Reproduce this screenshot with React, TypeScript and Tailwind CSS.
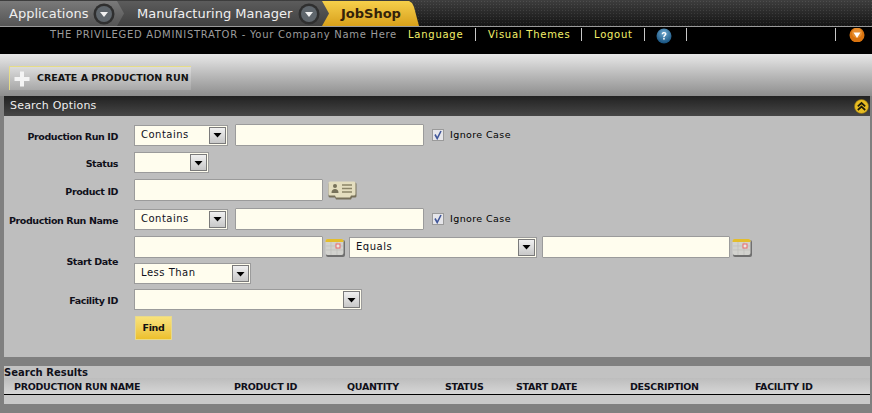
import type { ReactNode } from "react";

// small round button with white down triangle used in the top tabs
function TabArrow() {
  return (
    <svg width="22" height="22" viewBox="0 0 22 22" className="shrink-0">
      <circle cx="11" cy="11" r="10.5" fill="#2f2f2f" />
      <circle cx="11" cy="11" r="8" fill="#5f666c" />
      <path d="M7 9h8l-4 5z" fill="#f2f2f2" />
    </svg>
  );
}

function HelpIcon() {
  return (
    <svg width="16" height="16" viewBox="0 0 16 16">
      <defs>
        <radialGradient id="help" cx="50%" cy="30%" r="75%">
          <stop offset="0%" stopColor="#6fa9d0" />
          <stop offset="100%" stopColor="#0e4a78" />
        </radialGradient>
      </defs>
      <circle cx="8" cy="8" r="7.5" fill="url(#help)" />
      <path d="M5.6 6.2C5.7 4.6 6.8 4 8.1 4c1.4 0 2.4.8 2.4 2 0 1.8-1.9 1.7-1.9 3.2H7.2c0-2.2 1.7-2.2 1.7-3.2 0-.5-.3-.8-.9-.8-.6 0-.9.4-1 1z" fill="#fff" />
      <rect x="7.2" y="10" width="1.5" height="1.6" fill="#fff" />
    </svg>
  );
}

function OrangeIcon() {
  return (
    <svg width="16" height="14" viewBox="0 0 16 14">
      <circle cx="8" cy="7" r="7.5" fill="#d9730f" />
      <circle cx="8" cy="5" r="5" fill="#ee9a3c" opacity="0.7" />
      <path d="M4.5 4.5h7L8 10z" fill="#fff" />
    </svg>
  );
}

function CollapseIcon() {
  return (
    <svg width="15" height="15" viewBox="0 0 15 15">
      <circle cx="7.5" cy="7.5" r="7" fill="#e8bd22" stroke="#8a6d10" strokeWidth="0.6" />
      <path d="M3.8 7.4 7.5 4l3.7 3.4M3.8 11 7.5 7.6l3.7 3.4" fill="none" stroke="#1d1a08" strokeWidth="1.7" />
    </svg>
  );
}

function CardIcon() {
  return (
    <svg width="29" height="19" viewBox="0 0 29 19">
      <path d="M2 1.5h25a1.5 1.5 0 0 1 1.5 1.5v12a1.5 1.5 0 0 1-1.5 1.5h-3l-1 2H8l-1-2H2A1.5 1.5 0 0 1 .5 15V3A1.5 1.5 0 0 1 2 1.5z" fill="#77705a" />
      <path d="M2 .5h24A1.5 1.5 0 0 1 27.500 2v11a1.500 1.500 0 0 1-1.500 1.500h-3l-1 2H8l-1-2H2A1.500 1.500 0 0 1 .5 13V2A1.500 1.500 0 0 1 2 .5z" fill="#e4debf" />
      <circle cx="7" cy="5" r="2" fill="#77725a" />
      <path d="M3.500 12c0-3 1.500-4 3.500-4s3.500 1 3.500 4z" fill="#77725a" />
      <path d="M14 4h10M14 7.500h10M14 11h10" stroke="#8b8568" strokeWidth="1.300" />
    </svg>
  );
}

function CalendarIcon() {
  return (
    <svg width="20" height="19" viewBox="0 0 20 19" className="shrink-0">
      <rect x="1" y="2" width="19" height="17" rx="2" fill="#6f6f6f" />
      <rect x="0.500" y="1" width="18" height="16" rx="2" fill="#d2d2ce" />
      <path d="M0.500 3a2 2 0 0 1 2-2h14a2 2 0 0 1 2 2v1h-18z" fill="#e3bd2c" />
      <path d="M1 8h17M1 12h17M6 4v13M12 4v13" stroke="#bebeba" strokeWidth="0.700" />
      <rect x="11" y="6" width="4" height="4" fill="#e8e8e4" stroke="#ea6a6a" />
    </svg>
  );
}

function Check() {
  return (
    <span className="flex h-[12px] w-[12px] shrink-0 items-center justify-center border border-[#9a9a9a] bg-[#e6e6ea]">
      <svg width="10" height="10" viewBox="0 0 10 10">
        <path d="M2 4.500 4.200 8.500 8 1" fill="none" stroke="#41579a" strokeWidth="1.600" />
      </svg>
    </span>
  );
}

function Input({ w, className = "" }: { w: string; className?: string }) {
  return <div className={`h-[22px] shrink-0 rounded-[1px] border border-[#9b9b9b] bg-[#fffdee] ${w} ${className}`} />;
}

function Select({ w, value, className = "" }: { w: string; value?: string; className?: string }) {
  return (
    <div className={`flex h-[21px] shrink-0 items-center justify-between border border-[#9b9b9b] bg-[#fffdee] pr-[1px] ${w} ${className}`}>
      <span className="pb-[2px] pl-[6px] text-[10px] tracking-[0.5px] text-[#10101a]">{value}</span>
      <span className="flex h-[17px] w-[17px] items-center justify-center border border-[#7a7a7a] bg-gradient-to-b from-[#f0f0f0] to-[#c8c8c8]">
        <svg width="9" height="6" viewBox="0 0 9 6">
          <path d="M0.500 1h8L4.500 5.500z" fill="#000" />
        </svg>
      </span>
    </div>
  );
}

function Row({ label, children, className = "" }: { label?: string; children: ReactNode; className?: string }) {
  return (
    <div className={`flex items-center ${className}`}>
      <div className="w-[114px] shrink-0 whitespace-nowrap pt-[3px] text-right text-[9.500px] font-bold leading-none tracking-[-0.4px] text-[#10101a]">{label}</div>
      <div className="ml-[16px] flex min-w-0 flex-1 items-center">{children}</div>
    </div>
  );
}

function IgnoreCase() {
  return (
    <div className="ml-[8px] flex items-center gap-[6px]">
      <Check />
      <span className="text-[9.500px] tracking-[0.4px] text-[#000]">Ignore Case</span>
    </div>
  );
}

function Sep() {
  return <span className="h-[13px] w-px self-start bg-[#c8c8c8]" />;
}

export default function App() {
  const columns = [
    { name: "PRODUCTION RUN NAME", w: "w-[220px]" },
    { name: "PRODUCT ID", w: "w-[113px]" },
    { name: "QUANTITY", w: "w-[98px]" },
    { name: "STATUS", w: "w-[71px]" },
    { name: "START DATE", w: "w-[114px]" },
    { name: "DESCRIPTION", w: "w-[125px]" },
    { name: "FACILITY ID", w: "flex-1" },
  ];

  return (
    <div className="flex h-[413px] w-full flex-col overflow-hidden bg-[#808080] font-['DejaVu_Sans',Verdana,sans-serif]">
      {/* top tabs */}
      <div className="flex h-[27px] shrink-0 border-b border-[#9a9a9a] bg-[radial-gradient(circle,rgba(255,255,255,0.09)_1px,transparent_1px),linear-gradient(#3e3e3e,#141414)] bg-[length:3px_3px,100%_100%] pt-[1px]">
        <div className="z-20 flex h-[25px] w-[124px] shrink-0 items-center bg-gradient-to-b from-[#7a7a7a] to-[#555] pl-[9px] text-[13px] text-[#eee] [clip-path:polygon(0_0,117px_0,124px_50%,117px_100%,0_100%)]">
          <span className="mt-[1px] w-[84px]">Applications</span>
          <TabArrow />
        </div>
        <div className="z-10 -ml-[7px] flex h-[25px] w-[212px] shrink-0 items-center bg-gradient-to-b from-[#5c5c5c] to-[#404040] pl-[20px] text-[13px] text-[#f0f0f0] [clip-path:polygon(0_0,205px_0,212px_50%,205px_100%,0_100%)]">
          <span className="mt-[1px] w-[161px] whitespace-nowrap">Manufacturing Manager</span>
          <TabArrow />
        </div>
        <div className="-ml-[7px] flex h-[25px] w-[97px] shrink-0 items-center bg-gradient-to-b from-[#f6d04a] to-[#d8a018] pl-[19px] text-[13px] font-bold text-[#33220a] [clip-path:polygon(0_0,87px_0,90px_2px,92px_6px,97px_100%,0_100%)]">
          <span className="mt-[1px]">JobShop</span>
        </div>
      </div>

      {/* user bar */}
      <div className="flex h-[27px] shrink-0 bg-black pt-[1px] text-[10px] leading-[13px] tracking-[0.75px]">
        <span className="ml-[50px] w-[358px] whitespace-nowrap tracking-[0.7px] text-[#9c9c9c]">THE PRIVILEGED ADMINISTRATOR - Your Company Name Here</span>
        <span className="w-[67px] text-[#f4f06a]">Language</span>
        <Sep />
        <span className="ml-[12px] w-[93px] whitespace-nowrap text-[#f4f06a]">Visual Themes</span>
        <Sep />
        <span className="ml-[12px] w-[50px] text-[#f4f06a]">Logout</span>
        <Sep />
        <span className="ml-[11px] w-[30px]">
          <HelpIcon />
        </span>
        <Sep />
        <span className="w-[148px]" />
        <Sep />
        <span className="ml-[13px]">
          <OrangeIcon />
        </span>
      </div>

      {/* create button strip */}
      <div className="flex h-[42px] shrink-0 items-start bg-gradient-to-b from-[#e8e8e8] to-[#8e8e8e] pl-[9px] pt-[12px]">
        <div className="flex h-[24px] w-[182px] items-center border-l border-t border-[#e6dc88] bg-gradient-to-b from-[#dcdcdc] to-[#a8a8a8] pl-[4px]">
          <svg width="16" height="16" viewBox="0 0 16 16">
            <path d="M6 0.500h4V6h5.500v4H10v5.500H6V10H0.500V6H6z" fill="#f4f4f4" />
          </svg>
          <span className="ml-[7px] whitespace-nowrap text-[9.500px] font-bold text-[#111]">CREATE A PRODUCTION RUN</span>
        </div>
      </div>

      {/* search options */}
      <div className="ml-[4px] mr-[2px] flex h-[261px] shrink-0 flex-col">
        <div className="flex h-[20px] shrink-0 items-center justify-between bg-gradient-to-b from-[#222] to-[#474747] pl-[6px] pr-[1px] text-[11px] tracking-[0.2px] text-[#eee]">
          Search Options
          <CollapseIcon />
        </div>
        <div className="flex-1 bg-[#bebebe] pt-[8px]">
          <Row label="Production Run ID" className="h-[22px]">
            <Select w="w-[94px]" value="Contains" />
            <Input w="w-[189px]" className="ml-[7px]" />
            <IgnoreCase />
          </Row>
          <Row label="Status" className="mt-[6px] h-[21px]">
            <Select w="w-[75px]" />
          </Row>
          <Row label="Product ID" className="mt-[6px] h-[22px]">
            <Input w="w-[189px]" />
            <span className="ml-[5px] flex">
              <CardIcon />
            </span>
          </Row>
          <Row label="Production Run Name" className="mt-[7px] h-[22px]">
            <Select w="w-[94px]" value="Contains" />
            <Input w="w-[189px]" className="ml-[7px]" />
            <IgnoreCase />
          </Row>
          <Row label="Start Date" className="mt-[6px] h-[48px]">
            <div className="flex flex-col gap-[5px]">
              <div className="flex items-center">
                <Input w="w-[189px]" />
                <span className="ml-[2px] flex">
                  <CalendarIcon />
                </span>
                <Select w="w-[188px]" value="Equals" className="ml-[4px]" />
                <Input w="w-[188px]" className="ml-[5px]" />
                <span className="ml-[2px] flex">
                  <CalendarIcon />
                </span>
              </div>
              <Select w="w-[117px]" value="Less Than" />
            </div>
          </Row>
          <Row label="Facility ID" className="mt-[5px] h-[21px]">
            <Select w="w-[228px]" />
          </Row>
          <Row className="mt-[6px] h-[24px]">
            <div className="ml-[1px] flex h-[24px] w-[37px] items-center justify-center border border-[#e8d98a] bg-gradient-to-b from-[#f8e27a] to-[#ecc02a] text-[9.500px] font-bold tracking-[-0.3px] text-[#111]">
              Find
            </div>
          </Row>
        </div>
      </div>

      {/* search results */}
      <div className="ml-[4px] mr-[2px] mt-[9px] flex h-[38px] shrink-0 flex-col bg-[#c2c2c2]">
        <div className="h-[12px] pt-[1px] text-[10px] font-bold leading-[12px] text-[#10101a]">Search Results</div>
        <div className="flex h-[17px] items-center border-b border-black bg-gradient-to-b from-[#bdbdbd] to-[#d6d6d6] pl-[10px] pt-[3px] text-[9.500px] font-bold tracking-[-0.3px] text-[#10101a]">
          {columns.map((c) => (
            <span key={c.name} className={`${c.w} whitespace-nowrap`}>
              {c.name}
            </span>
          ))}
        </div>
        <div className="flex-1 bg-[#c8c8c8]" />
      </div>
    </div>
  );
}
